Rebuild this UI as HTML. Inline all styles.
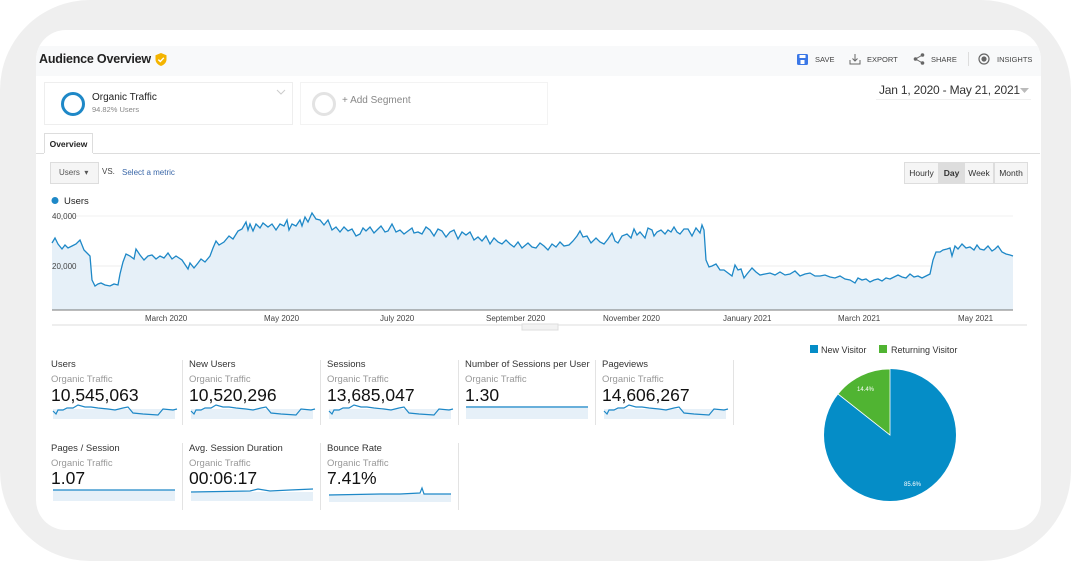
<!DOCTYPE html>
<html><head><meta charset="utf-8"><style>
*{margin:0;padding:0;box-sizing:border-box}
body{width:1071px;height:561px;background:#fff;position:relative;overflow:hidden;font-family:"Liberation Sans",sans-serif;color:#222}
.frame{position:absolute;left:0;top:0;width:1071px;height:561px;background:#efefef;border-radius:90px}
.card{position:absolute;left:36px;top:30px;width:1005px;height:500px;background:#fff;border-radius:30px;overflow:hidden}
.a{position:absolute;white-space:nowrap}
.hdr{position:absolute;left:0;top:16px;width:1005px;height:30px;background:#f8f9fa}
.seg{position:absolute;border:1px solid #eee;background:#fff}
.mt{font-size:9.5px;color:#333}
.ms{font-size:9.5px;color:#999}
.mv{font-size:17.5px;color:#111}
.vd{position:absolute;width:1px;background:#e3e3e3}
.btn{position:absolute;top:162px;height:22px;border:1px solid #ddd;background:#f5f5f5;font-size:8.5px;line-height:20px;text-align:center;color:#333}
.lab{font-size:8px;color:#444}
</style></head><body>
<div class="frame"></div>
<div class="card">
<div class="hdr"></div>
</div>
<div class="a" style="left:39px;top:52px;font-size:12.5px;font-weight:bold;color:#222;letter-spacing:-0.2px">Audience Overview</div>
<svg class="a" style="left:155px;top:53px" width="12" height="13" viewBox="0 0 12 13"><path d="M6 0L11.5 2.2V6.5C11.5 9.5 9 12 6 13C3 12 0.5 9.5 0.5 6.5V2.2Z" fill="#f4b400"/><path d="M3.3 6.6L5.3 8.5L8.8 4.8" stroke="#fff" stroke-width="1.4" fill="none"/></svg>
<svg class="a" style="left:797px;top:54px" width="11" height="11"><rect x="0" y="0" width="11" height="11" rx="1.5" fill="#3b78e7"/><rect x="2.5" y="1" width="6" height="3" fill="#fff"/><rect x="3.5" y="6" width="4" height="4" fill="#fff"/></svg>
<div class="a" style="left:815px;top:55px;font-size:7.5px;color:#444">SAVE</div>
<svg class="a" style="left:849px;top:53px" width="12" height="12" fill="none" stroke="#666" stroke-width="1"><path d="M6 1V8M3.5 5.5L6 8L8.5 5.5M1 7V11H11V7"/></svg>
<div class="a" style="left:867px;top:55px;font-size:7.5px;color:#444">EXPORT</div>
<svg class="a" style="left:913px;top:53px" width="12" height="12" fill="#666" stroke="#666" stroke-width="1"><circle cx="9.5" cy="2" r="1.3"/><circle cx="2.5" cy="6" r="1.3"/><circle cx="9.5" cy="10" r="1.3"/><path d="M9.5 2L2.5 6L9.5 10" fill="none"/></svg>
<div class="a" style="left:931px;top:55px;font-size:7.5px;color:#444">SHARE</div>
<div class="a" style="left:968px;top:52px;width:1px;height:14px;background:#ddd"></div>
<svg class="a" style="left:978px;top:53px" width="12" height="12" fill="none" stroke="#666" stroke-width="1.2"><circle cx="6" cy="6" r="5"/><circle cx="6" cy="6" r="2" fill="#666"/></svg>
<div class="a" style="left:997px;top:55px;font-size:7.5px;color:#444">INSIGHTS</div>
<div class="seg" style="left:44px;top:82px;width:249px;height:43px"></div>
<svg class="a" style="left:60px;top:91px" width="26" height="26"><circle cx="13" cy="13" r="10.5" fill="none" stroke="#1e88c7" stroke-width="3"/></svg>
<div class="a" style="left:92px;top:92px;font-size:10px;color:#222">Organic Traffic</div>
<div class="a" style="left:92px;top:105px;font-size:7.5px;color:#888">94.82% Users</div>
<svg class="a" style="left:276px;top:89px" width="10" height="6"><path d="M1 1L5 5L9 1" stroke="#ccc" fill="none"/></svg>
<div class="seg" style="left:300px;top:82px;width:248px;height:43px;border-color:#f3f3f3"></div>
<svg class="a" style="left:311px;top:91px" width="26" height="26"><circle cx="13" cy="13" r="10.5" fill="none" stroke="#e3e3e3" stroke-width="3"/></svg>
<div class="a" style="left:342px;top:95px;font-size:10px;color:#888">+ Add Segment</div>
<div class="a" style="left:879px;top:83px;font-size:12px;color:#333;letter-spacing:-0.2px">Jan 1, 2020 - May 21, 2021</div>
<svg class="a" style="left:1020px;top:88px" width="9" height="5"><path d="M0 0H9L4.5 5Z" fill="#bbb"/></svg>
<div class="a" style="left:876px;top:99px;width:155px;height:1px;background:#f0f0f0"></div>
<div class="a" style="left:44px;top:133px;width:49px;height:21px;border:1px solid #ddd;border-bottom:none;background:#fff;font-size:8.5px;font-weight:bold;line-height:20px;text-align:center">Overview</div>
<div class="a" style="left:36px;top:153px;width:1004px;height:1px;background:#ddd"></div>
<div class="a" style="left:44px;top:153px;width:49px;height:1px;background:#fff"></div>
<div class="a" style="left:50px;top:162px;width:49px;height:22px;border:1px solid #ddd;background:#f5f5f5;font-size:8px;line-height:20px;padding-left:8px;color:#555">Users &nbsp;▾</div>
<div class="a" style="left:102px;top:167px;font-size:8px;color:#444">VS.</div>
<div class="a" style="left:122px;top:168px;font-size:8px;color:#3a67a8">Select a metric</div>
<div class="btn" style="left:904px;width:35px">Hourly</div>
<div class="btn" style="left:939px;width:25px;background:#ddd;font-weight:bold">Day</div>
<div class="btn" style="left:964px;width:30px">Week</div>
<div class="btn" style="left:994px;width:34px">Month</div>
<svg class="a" style="left:51px;top:196px" width="9" height="9"><circle cx="4" cy="4.5" r="3.5" fill="#1e88c7"/></svg>
<div class="a" style="left:64px;top:196px;font-size:9.5px;color:#222">Users</div>
<svg class="a" style="left:0;top:0" width="1071" height="340">
<line x1="52" y1="216" x2="1013" y2="216" stroke="#f0f0f0"/>
<line x1="52" y1="266" x2="1013" y2="266" stroke="#eee"/>
<path d="M52,243 L55,238 58,244 62,249 65,245 68,248 72,246 76,244 80,240 84,250 88,254 90,256 92,280 95,286 98,284 101,283 105,285 110,286 114,284 118,285 120,274 123,262 126,254 130,256 134,259 136,249 140,255 144,260 148,256 152,255 156,259 160,256 164,258 168,253 172,259 176,256 182,260 186,266 188,269 190,263 194,268 198,263 201,259 205,262 210,256 213,248 216,241 219,245 224,242 229,236 233,239 238,231 242,229 246,222 248,230 250,224 253,231 256,224 260,228 263,223 268,227 272,224 276,230 280,224 284,226 287,220 289,230 292,224 296,226 300,220 302,226 305,217 308,222 312,213 316,219 320,220 324,225 328,220 332,230 336,227 340,232 344,227 348,231 352,229 356,236 360,234 363,228 366,231 370,227 374,233 378,229 381,226 385,232 388,231 392,224 396,232 400,230 404,234 408,231 412,228 414,233 418,232 422,234 426,227 430,230 434,236 438,229 442,231 446,237 450,232 454,230 458,239 462,232 466,235 470,232 474,240 478,237 482,241 486,236 490,244 494,238 498,242 502,244 506,240 510,244 514,247 518,242 522,248 528,243 532,247 536,248 540,243 544,246 548,250 552,244 556,247 560,242 564,246 569,245 573,241 577,236 580,231 583,237 587,236 591,243 596,238 600,242 604,244 608,239 612,233 615,241 618,243 622,236 627,234 631,238 634,229 637,235 640,232 645,238 648,228 652,230 654,236 657,232 661,230 665,234 668,230 671,232 674,227 677,232 680,234 684,229 688,229 692,236 696,228 700,233 702,225 704,230 706,260 709,267 712,266 716,264 720,270 724,270 728,273 732,276 735,265 738,270 741,269 744,278 747,274 752,268 756,272 760,275 765,274 770,273 775,275 780,272 785,275 790,274 795,271 800,276 805,274 810,273 815,276 820,276 825,275 830,277 835,278 840,276 845,279 850,280 855,283 858,278 862,280 866,279 870,282 874,280 878,279 882,281 886,278 890,279 894,277 898,275 902,277 906,278 910,274 914,277 918,276 922,278 926,276 930,274 933,260 936,252 940,252 943,250 947,249 950,248 952,256 955,246 958,249 962,244 966,248 970,247 974,250 977,245 980,249 984,250 988,246 992,251 995,249 998,246 1002,252 1006,254 1010,255 1013,256 L1013,310 L52,310 Z" fill="#e6f0f8" stroke="none"/>
<path d="M52,243 L55,238 58,244 62,249 65,245 68,248 72,246 76,244 80,240 84,250 88,254 90,256 92,280 95,286 98,284 101,283 105,285 110,286 114,284 118,285 120,274 123,262 126,254 130,256 134,259 136,249 140,255 144,260 148,256 152,255 156,259 160,256 164,258 168,253 172,259 176,256 182,260 186,266 188,269 190,263 194,268 198,263 201,259 205,262 210,256 213,248 216,241 219,245 224,242 229,236 233,239 238,231 242,229 246,222 248,230 250,224 253,231 256,224 260,228 263,223 268,227 272,224 276,230 280,224 284,226 287,220 289,230 292,224 296,226 300,220 302,226 305,217 308,222 312,213 316,219 320,220 324,225 328,220 332,230 336,227 340,232 344,227 348,231 352,229 356,236 360,234 363,228 366,231 370,227 374,233 378,229 381,226 385,232 388,231 392,224 396,232 400,230 404,234 408,231 412,228 414,233 418,232 422,234 426,227 430,230 434,236 438,229 442,231 446,237 450,232 454,230 458,239 462,232 466,235 470,232 474,240 478,237 482,241 486,236 490,244 494,238 498,242 502,244 506,240 510,244 514,247 518,242 522,248 528,243 532,247 536,248 540,243 544,246 548,250 552,244 556,247 560,242 564,246 569,245 573,241 577,236 580,231 583,237 587,236 591,243 596,238 600,242 604,244 608,239 612,233 615,241 618,243 622,236 627,234 631,238 634,229 637,235 640,232 645,238 648,228 652,230 654,236 657,232 661,230 665,234 668,230 671,232 674,227 677,232 680,234 684,229 688,229 692,236 696,228 700,233 702,225 704,230 706,260 709,267 712,266 716,264 720,270 724,270 728,273 732,276 735,265 738,270 741,269 744,278 747,274 752,268 756,272 760,275 765,274 770,273 775,275 780,272 785,275 790,274 795,271 800,276 805,274 810,273 815,276 820,276 825,275 830,277 835,278 840,276 845,279 850,280 855,283 858,278 862,280 866,279 870,282 874,280 878,279 882,281 886,278 890,279 894,277 898,275 902,277 906,278 910,274 914,277 918,276 922,278 926,276 930,274 933,260 936,252 940,252 943,250 947,249 950,248 952,256 955,246 958,249 962,244 966,248 970,247 974,250 977,245 980,249 984,250 988,246 992,251 995,249 998,246 1002,252 1006,254 1010,255 1013,256" fill="none" stroke="#1e88c7" stroke-width="1.3"/>
<line x1="52" y1="310" x2="1013" y2="310" stroke="#777" stroke-width="1"/>
<line x1="52" y1="325" x2="1027" y2="325" stroke="#ddd"/>
<rect x="522" y="324" width="36" height="6" fill="#f2f2f2" stroke="#ddd"/>
</svg>
<div class="a lab" style="left:52px;top:212px">40,000</div>
<div class="a lab" style="left:52px;top:262px">20,000</div>
<div class="a lab" style="left:145px;top:314px">March 2020</div>
<div class="a lab" style="left:264px;top:314px">May 2020</div>
<div class="a lab" style="left:380px;top:314px">July 2020</div>
<div class="a lab" style="left:486px;top:314px">September 2020</div>
<div class="a lab" style="left:603px;top:314px">November 2020</div>
<div class="a lab" style="left:723px;top:314px">January 2021</div>
<div class="a lab" style="left:838px;top:314px">March 2021</div>
<div class="a lab" style="left:958px;top:314px">May 2021</div>
<div class="vd" style="left:182px;top:360px;height:65px"></div>
<div class="vd" style="left:320px;top:360px;height:65px"></div>
<div class="vd" style="left:458px;top:360px;height:65px"></div>
<div class="vd" style="left:595px;top:360px;height:65px"></div>
<div class="vd" style="left:733px;top:360px;height:65px"></div>
<div class="vd" style="left:182px;top:443px;height:67px"></div>
<div class="vd" style="left:320px;top:443px;height:67px"></div>
<div class="vd" style="left:458px;top:443px;height:67px"></div>
<div class="a mt" style="left:51px;top:359px">Users</div><div class="a ms" style="left:51px;top:374px">Organic Traffic</div><div class="a mv" style="left:51px;top:385px">10,545,063</div>
<div class="a mt" style="left:189px;top:359px">New Users</div><div class="a ms" style="left:189px;top:374px">Organic Traffic</div><div class="a mv" style="left:189px;top:385px">10,520,296</div>
<div class="a mt" style="left:327px;top:359px">Sessions</div><div class="a ms" style="left:327px;top:374px">Organic Traffic</div><div class="a mv" style="left:327px;top:385px">13,685,047</div>
<div class="a mt" style="left:465px;top:359px">Number of Sessions per User</div><div class="a ms" style="left:465px;top:374px">Organic Traffic</div><div class="a mv" style="left:465px;top:385px">1.30</div>
<div class="a mt" style="left:602px;top:359px">Pageviews</div><div class="a ms" style="left:602px;top:374px">Organic Traffic</div><div class="a mv" style="left:602px;top:385px">14,606,267</div>
<div class="a mt" style="left:51px;top:443px">Pages / Session</div><div class="a ms" style="left:51px;top:458px">Organic Traffic</div><div class="a mv" style="left:51px;top:468px">1.07</div>
<div class="a mt" style="left:189px;top:443px">Avg. Session Duration</div><div class="a ms" style="left:189px;top:458px">Organic Traffic</div><div class="a mv" style="left:189px;top:468px">00:06:17</div>
<div class="a mt" style="left:327px;top:443px">Bounce Rate</div><div class="a ms" style="left:327px;top:458px">Organic Traffic</div><div class="a mv" style="left:327px;top:468px">7.41%</div>
<svg class="a" style="left:0;top:0" width="760" height="520" fill="none" stroke="#1e88c7" stroke-width="1.2">
<defs><path id="s1" d="M0,7 L3,10 5,6 10,6 14,4 20,4 25,1 32,3 38,3 45,4 55,5 62,6 70,4 75,3 80,9 90,10 105,11 110,5 120,6 124,5"/></defs>
<g fill="#e6f0f8" stroke="none"><rect x="53" y="409" width="122" height="10"/><rect x="191" y="409" width="122" height="10"/><rect x="329" y="409" width="122" height="10"/><rect x="466" y="406" width="122" height="13"/><rect x="604" y="409" width="122" height="10"/><rect x="53" y="490" width="122" height="11"/><rect x="191" y="492" width="122" height="9"/><rect x="329" y="494" width="122" height="8"/></g>
<use href="#s1" x="53" y="404"/><use href="#s1" x="191" y="404"/><use href="#s1" x="329" y="404"/><use href="#s1" x="604" y="404"/>
<path d="M466,407 L588,407"/><path d="M53,490 L175,490"/>
<path d="M191,492 L250,491 258,489 270,491 290,490 313,489"/>
<path d="M329,495 L380,494 400,494 420,493 422,488 424,494 451,494"/>
</svg>
<svg class="a" style="left:810px;top:345px" width="8" height="8"><rect width="8" height="8" fill="#058dc7"/></svg>
<div class="a" style="left:821px;top:345px;font-size:9px;color:#333">New Visitor</div>
<svg class="a" style="left:879px;top:345px" width="8" height="8"><rect width="8" height="8" fill="#50b432"/></svg>
<div class="a" style="left:891px;top:345px;font-size:9px;color:#333">Returning Visitor</div>
<svg class="a" style="left:0;top:0" width="1071" height="561">
<circle cx="890" cy="435" r="66" fill="#058dc7"/>
<path d="M890,435 L838,394 A66,66 0 0 1 890,369 Z" fill="#50b432" stroke="#fff" stroke-width="0.8"/>
<text x="857" y="391" font-size="6" fill="#fff" font-family="Liberation Sans">14.4%</text>
<text x="904" y="486" font-size="6" fill="#fff" font-family="Liberation Sans">85.6%</text>
</svg>
</body></html>
